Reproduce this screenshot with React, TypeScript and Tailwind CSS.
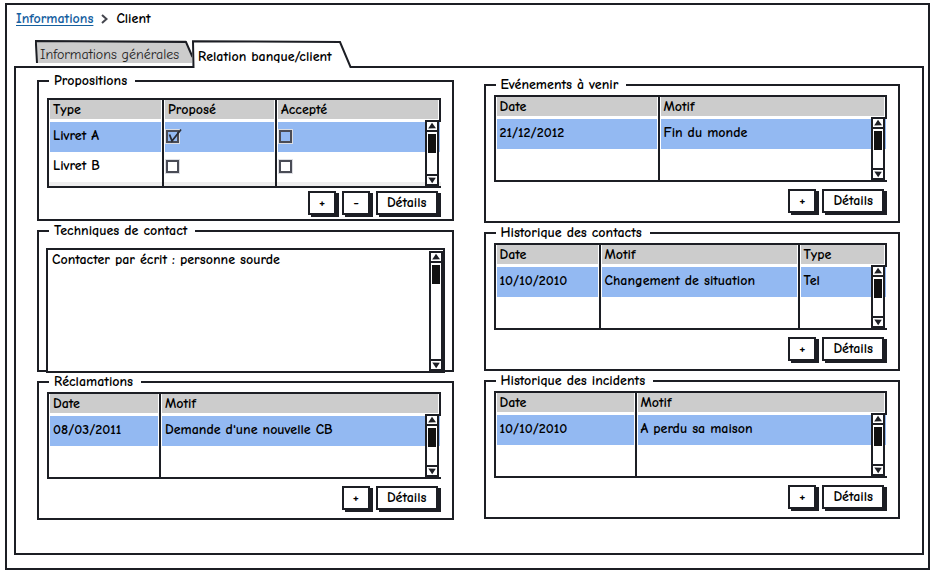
import React, { useState } from "react";

type Cell = string | boolean;

function ScrollBar({ className }: { className: string }) {
  return (
    <div
      aria-hidden="true"
      className={"absolute flex w-[14px] flex-col border-2 border-[#1c1e24] bg-white " + className}
    >
      <svg viewBox="0 0 10 10" className="h-[10px] w-full border-b-2 border-[#1c1e24]" preserveAspectRatio="none">
        <path d="M1.2 8.2 L5 1 L9 7.8 Z" fill="#1c1e24" />
      </svg>
      <div className="flex-1 px-px pt-[2px]">
        <div className="h-[19px] bg-[#111]" />
      </div>
      <svg viewBox="0 0 10 10" className="h-[10px] w-full border-t-2 border-[#1c1e24]" preserveAspectRatio="none">
        <path d="M1.3 1.8 L8.8 2.2 L5.2 9.2 Z" fill="#1c1e24" />
      </svg>
    </div>
  );
}

function Check({ label, initial }: { label: string; initial: boolean }) {
  const [on, setOn] = useState(initial);
  return (
    <span className="relative block h-[14px] w-[14px]">
      <input
        type="checkbox"
        aria-label={label}
        checked={on}
        onChange={() => setOn(!on)}
        className="block h-[13px] w-[13px] appearance-none border-2 border-[#4a4c56] outline outline-1 outline-[#dcdde2]"
      />
      {on && (
        <svg viewBox="0 0 18 16" className="pointer-events-none absolute -top-[2px] left-0 h-4 w-[18px]">
          <path d="M3.5 6.5 L6 13 L15 1.5" fill="none" stroke="#2a2c34" strokeWidth="1.8" />
        </svg>
      )}
    </span>
  );
}

function SketchButton({ children, label }: { children: React.ReactNode; label?: string }) {
  return (
    <button
      type="button"
      aria-label={label}
      className="h-6 min-w-[27px] border-2 border-[#1c1e24] bg-white px-[9px] leading-5 shadow-[3px_2px_0_#1c1e24]"
    >
      {children}
    </button>
  );
}

function Group({ title, children }: { title: string; children: React.ReactNode }) {
  return (
    <fieldset className="min-w-0 border-2 border-[#1c1e24]">
      <legend className="ml-[10px] pr-2 pl-[5px] leading-4">{title}</legend>
      {children}
    </fieldset>
  );
}

function Grid({
  heads,
  widths,
  rows,
  tail,
}: {
  heads: string[];
  widths: string[];
  rows: Cell[][];
  tail: string;
}) {
  return (
    <div className="relative mr-[11px] ml-2 border-y-2 border-l-2 border-[#1c1e24]">
      <table className="w-full table-fixed border-separate border-spacing-0 text-left">
        <thead>
          <tr>
            {heads.map((h, i) => (
              <th
                key={h}
                className={
                  "h-[22px] bg-[#cccccc] p-0 pb-[3px] leading-[19px] font-bold shadow-[inset_1px_0_0_#fff,inset_-1px_0_0_#fff,inset_0_-3px_0_#fff] " +
                  widths[i] +
                  (i > 0 ? " border-l-2 border-[#1c1e24] pl-[4px]" : " pl-[4px]") +
                  (i === heads.length - 1 ? " border-r-2 border-r-[#1c1e24]" : "")
                }
              >
                {h}
              </th>
            ))}
          </tr>
        </thead>
        <tbody>
          {rows.map((r, n) => (
            <tr key={n} className={n === 0 ? "bg-[#93b9f2]" : "bg-white"}>
              {r.map((c, i) => (
                <td
                  key={i}
                  className={
                    "h-[30px] p-0 leading-5 shadow-[inset_1px_0_0_#fff,inset_-1px_0_0_#fff] " +
                    (i > 0 ? "border-l-2 border-[#1c1e24] " : "") +
                    (typeof c === "string" ? "pb-[3px] pl-[4px]" : "pl-[2px]")
                  }
                >
                  {typeof c === "string" ? c : <Check label={heads[i] + " " + r[0]} initial={c} />}
                </td>
              ))}
            </tr>
          ))}
          <tr className={tail}>
            {heads.map((h, i) => (
              <td key={h} className={"p-0 " + (i > 0 ? "border-l-2 border-[#1c1e24]" : "")} />
            ))}
          </tr>
        </tbody>
      </table>
      <ScrollBar className="top-[20px] right-[2px] bottom-0" />
    </div>
  );
}

function Actions({ remove, className }: { remove?: boolean; className: string }) {
  return (
    <div className={"flex justify-end gap-[6px] pr-[14px] " + className}>
      <SketchButton label="Ajouter">+</SketchButton>
      {remove && <SketchButton label="Retirer">-</SketchButton>}
      <SketchButton>Détails</SketchButton>
    </div>
  );
}

export default function App() {
  const [note, setNote] = useState("Contacter par écrit : personne sourde");
  return (
    <div className="bg-white pt-[3px] pr-1 pb-[5px] pl-[5px] font-['Comic_Sans_MS','Comic_Neue',Inter,sans-serif] text-[14px] font-bold text-black">
      <main className="border-2 border-[#1c1e24] pr-1 pb-[13px] pl-[7px]">
        <nav aria-label="Fil d'Ariane" className="flex items-center gap-2 pt-1 pl-[2px] leading-5">
          <a href="#informations" className="text-[#15609f] underline underline-offset-2">
            Informations
          </a>
          <svg viewBox="0 0 7 10" className="h-[10px] w-[7px]">
            <path d="M1 1 L5.5 5 L1 9" fill="none" stroke="#44464e" strokeWidth="2" />
          </svg>
          <span>Client</span>
        </nav>

        <div role="tablist" className="flex items-end pt-[11px] pl-[21px]">
          <button
            type="button"
            role="tab"
            aria-selected="false"
            className="relative mb-[3px] h-[23px] w-[157px] pt-1 pl-[5px] text-left font-normal text-[#222]"
          >
            <svg viewBox="0 0 157 23" className="absolute inset-0 h-full w-full" preserveAspectRatio="none">
              <path d="M1 0 H151 L157 18 V23 H1 Z" fill="#cccccc" />
              <path d="M2 23 L0.8 1 L151 2 L157.5 17" fill="none" stroke="#1c1e24" strokeWidth="2" />
            </svg>
            <span className="relative whitespace-nowrap">Informations générales</span>
          </button>
          <button
            type="button"
            role="tab"
            aria-selected="true"
            className="relative z-10 -mb-[2px] h-[28px] w-[160px] pt-1 pl-[6px] text-left"
          >
            <svg viewBox="0 0 160 28" className="absolute inset-0 h-full w-full" preserveAspectRatio="none">
              <path d="M1 1 L148 2 L159 28 H1 Z" fill="#ffffff" />
              <path d="M1.5 28 L1 1.2 L148 2 L158.5 27 H160" fill="none" stroke="#1c1e24" strokeWidth="2" />
            </svg>
            <span className="relative whitespace-nowrap">Relation banque/client</span>
          </button>
        </div>

        <div
          role="tabpanel"
          className="grid grid-cols-2 gap-x-[30px] border-2 border-[#1c1e24] pt-[5px] pr-[22px] pb-[33px] pl-[21px]"
        >
          <div className="flex flex-col gap-[2px]">
            <Group title="Propositions">
              <div className="pt-[9px]">
                <Grid
                  heads={["Type", "Proposé", "Accepté"]}
                  widths={["w-[113px]", "w-[113px]", ""]}
                  rows={[
                    ["Livret A", true, false],
                    ["Livret B", false, false],
                  ]}
                  tail="h-1 bg-[#eeeeee]"
                />
              </div>
              <Actions remove className="pt-[3px] pb-1" />
            </Group>
            <Group title="Techniques de contact">
              <div className="relative mr-[7px] -mb-[3px] ml-[7px] pt-[9px]">
                <textarea
                  aria-label="Techniques de contact"
                  value={note}
                  onChange={(e) => setNote(e.target.value)}
                  className="block h-[125px] w-full resize-none border-2 border-[#1c1e24] bg-white px-[4px] leading-[20px] outline-none"
                />
                <ScrollBar className="top-[12px] right-[2px] bottom-[2px]" />
              </div>
            </Group>
            <Group title="Réclamations">
              <div className="pt-[2px]">
                <Grid
                  heads={["Date", "Motif"]}
                  widths={["w-[110px]", ""]}
                  rows={[["08/03/2011", "Demande d'une nouvelle CB"]]}
                  tail="h-[31px]"
                />
              </div>
              <Actions className="pt-[7px] pb-2" />
            </Group>
          </div>

          <div className="flex flex-col gap-[2px] pt-1">
            <Group title="Evénements à venir">
              <div className="pt-[2px]">
                <Grid
                  heads={["Date", "Motif"]}
                  widths={["w-[162px]", ""]}
                  rows={[["21/12/2012", "Fin du monde"]]}
                  tail="h-[31px]"
                />
              </div>
              <Actions className="pt-[7px] pb-2" />
            </Group>
            <Group title="Historique des contacts">
              <div className="pt-[2px]">
                <Grid
                  heads={["Date", "Motif", "Type"]}
                  widths={["w-[103px]", "w-[199px]", ""]}
                  rows={[["10/10/2010", "Changement de situation", "Tel"]]}
                  tail="h-[31px]"
                />
              </div>
              <Actions className="pt-[7px] pb-2" />
            </Group>
            <Group title="Historique des incidents">
              <div className="pt-[2px]">
                <Grid
                  heads={["Date", "Motif"]}
                  widths={["w-[139px]", ""]}
                  rows={[["10/10/2010", "A perdu sa maison"]]}
                  tail="h-[31px]"
                />
              </div>
              <Actions className="pt-[7px] pb-2" />
            </Group>
          </div>
        </div>
      </main>
    </div>
  );
}
